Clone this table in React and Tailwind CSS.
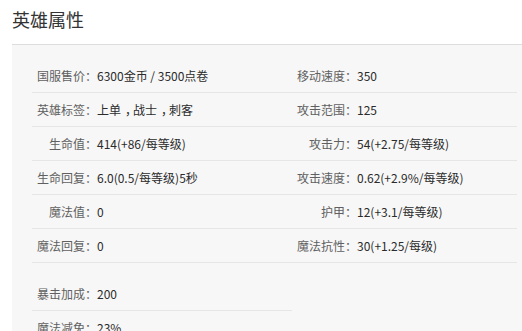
import React from "react";

const Comma = () => <span className="inline-block translate-x-[4px]">，</span>;

const left = [
  ["国服售价", "6300金币 / 3500点卷"],
  ["英雄标签", <>上单<Comma />战士<Comma />刺客</>],
  ["生命值", "414(+86/每等级)"],
  ["生命回复", "6.0(0.5/每等级)5秒"],
  ["魔法值", "0"],
  ["魔法回复", "0"],
];

const right = [
  ["移动速度", "350"],
  ["攻击范围", "125"],
  ["攻击力", "54(+2.75/每等级)"],
  ["攻击速度", "0.62(+2.9%/每等级)"],
  ["护甲", "12(+3.1/每等级)"],
  ["魔法抗性", "30(+1.25/每级)"],
];

const extra = [
  ["暴击加成", "200"],
  ["魔法减免", "23%"],
];

const Row = ({ label, value }) => (
  <div className="flex h-[34px] items-center border-b border-[#e6e6e6] pl-[5px] whitespace-nowrap">
    <span className="flex w-[60px] shrink-0 justify-end text-[#606060]">{label}：</span>
    <span className="text-[#2b2b2b]">{value}</span>
  </div>
);

export default function App() {
  return (
    <div
      className="h-[331px] w-[522px] overflow-hidden bg-white text-[12px]"
      style={{ fontFamily: '"Noto Sans CJK SC", "Noto Sans", sans-serif' }}
    >
      <h2 className="ml-3 h-[44px] pt-[7px] text-[18px] leading-[24px] font-normal text-[#333]">英雄属性</h2>
      <div className="ml-3 border-t border-[#dddddd] bg-[#f7f7f7] pt-[14px] pl-5 pr-[5px] pb-4">
        <div className="grid grid-cols-[260px_1fr]">
          <div>
            {left.map(([l, v]) => (
              <Row key={l} label={l} value={v} />
            ))}
          </div>
          <div>
            {right.map(([l, v]) => (
              <Row key={l} label={l} value={v} />
            ))}
          </div>
        </div>
        <div className="mt-[14px] w-[260px]">
          {extra.map(([l, v]) => (
            <Row key={l} label={l} value={v} />
          ))}
        </div>
      </div>
    </div>
  );
}
